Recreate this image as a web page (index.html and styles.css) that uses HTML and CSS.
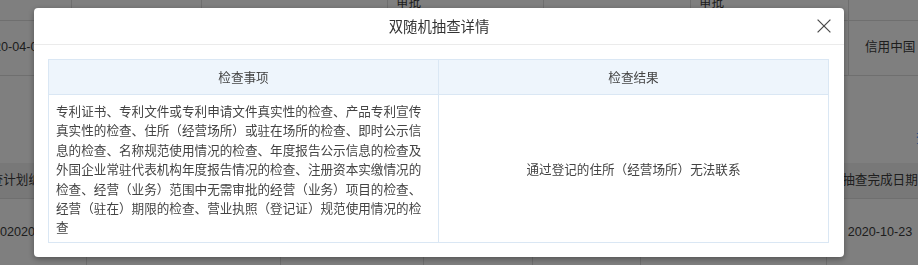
FILE: index.html
```html
<!DOCTYPE html>
<html lang="zh-CN">
<head>
<meta charset="utf-8">
<title>双随机抽查详情</title>
<link rel="stylesheet" href="styles.css">
</head>
<body>
<div class="page">
  <div class="bg-table t1">
    <div class="cell c-top"></div>
    <div class="cell c-top"></div>
    <div class="cell c-top"></div>
    <div class="cell c-top">审批</div>
    <div class="cell c-top"></div>
    <div class="cell c-top">审批</div>
    <div class="cell c-top"></div>

    <div class="cell c-row first">2020-04-09</div>
    <div class="cell c-row"></div>
    <div class="cell c-row"></div>
    <div class="cell c-row"></div>
    <div class="cell c-row"></div>
    <div class="cell c-row"></div>
    <div class="cell c-row last">信用中国（北京）</div>
  </div>

  <div class="mid"><span class="link">查看</span></div>

  <div class="bg-table t2">
    <div class="cell c-head first2">抽查计划编号</div>
    <div class="cell c-head"></div>
    <div class="cell c-head"></div>
    <div class="cell c-head"></div>
    <div class="cell c-head"></div>
    <div class="cell c-head"></div>
    <div class="cell c-head center">抽查完成日期</div>
    <div class="cell c-head"></div>

    <div class="cell c-body first3">2020202010</div>
    <div class="cell c-body"></div>
    <div class="cell c-body"></div>
    <div class="cell c-body"></div>
    <div class="cell c-body"></div>
    <div class="cell c-body"></div>
    <div class="cell c-body center">2020-10-23</div>
    <div class="cell c-body"></div>
  </div>
</div>

<div class="mask"></div>

<div class="modal">
  <div class="modal-header">
    <span></span>
    <h2 class="modal-title">双随机抽查详情</h2>
    <button class="modal-close" aria-label="关闭">
      <svg width="14" height="14" viewBox="0 0 14 14"><path d="M0.6 0.6 L13.4 13.4 M13.4 0.6 L0.6 13.4" stroke="#4a4a4a" stroke-width="1.25" fill="none"/></svg>
    </button>
  </div>
  <div class="modal-body">
    <div class="dtable">
      <div class="dt-head">检查事项</div>
      <div class="dt-head">检查结果</div>
      <div class="dt-cell dt-left">专利证书、专利文件或专利申请文件真实性的检查、产品专利宣传真实性的检查、住所（经营场所）或驻在场所的检查、即时公示信息的检查、名称规范使用情况的检查、年度报告公示信息的检查及外国企业常驻代表机构年度报告情况的检查、注册资本实缴情况的检查、经营（业务）范围中无需审批的经营（业务）项目的检查、经营（驻在）期限的检查、营业执照（登记证）规范使用情况的检查</div>
      <div class="dt-cell dt-right">通过登记的住所（经营场所）无法联系</div>
    </div>
  </div>
</div>
</body>
</html>
```

FILE: styles.css
```css
* { box-sizing: border-box; }

html, body {
  margin: 0;
  padding: 0;
  width: 918px;
  height: 265px;
  overflow: hidden;
  background: #fff;
  font-family: "Liberation Sans", "Noto Sans CJK SC", sans-serif;
  font-size: 12.6px;
  color: #444;
  text-spacing-trim: space-all;
}

.page {
  margin-left: -100px;
  width: 1200px;
}

.bg-table {
  display: grid;
}

.t1 {
  margin-top: -20px;
  grid-template-columns: 172px 130px 186px 156px 147px 158px 251px;
}

.t2 {
  grid-template-columns: 187px 194px 143px 109px 108px 186px 107px 166px;
}

.cell {
  border-right: 1px solid #dfdfdf;
  border-bottom: 1px solid #dfdfdf;
  display: flex;
  align-items: center;
  line-height: 19.4px;
  white-space: nowrap;
  overflow: hidden;
  color: #3c3c3c;
}

.c-top {
  height: 41px;
  align-items: flex-end;
  padding: 0 0 8px 8px;
}

.c-row {
  height: 55px;
}

.first { padding-left: 80px; }
.last { padding-left: 16px; }

.mid {
  height: 87px;
  display: flex;
  align-items: center;
  padding: 38px 0 0 1016px;
}

.link {
  color: #1890ff;
  line-height: 19.4px;
}

.c-head {
  height: 36px;
  background: #f1f1f1;
}

.c-body {
  height: 80px;
  padding-bottom: 12px;
}

.first2 { padding-left: 78px; }
.first3 { padding-left: 93px; }
.center { justify-content: center; }

.mask {
  position: fixed;
  inset: 0;
  background: rgba(0, 0, 0, 0.5);
}

.modal {
  position: fixed;
  top: 8px;
  left: 34px;
  width: 810px;
  height: 249px;
  background: #fff;
  border-radius: 4px;
  box-shadow: 0 2px 6px rgba(0, 0, 0, 0.35);
  font-family: "Noto Sans CJK SC", "Liberation Sans", sans-serif;
}

.modal-header {
  height: 37px;
  border-bottom: 1px solid #ebebeb;
  display: grid;
  grid-template-columns: 1fr auto 1fr;
  align-items: center;
}

.modal-title {
  margin: 0;
  font-size: 14.4px;
  font-weight: normal;
  line-height: 20px;
  color: #333;
}

.modal-close {
  justify-self: end;
  margin-right: 13px;
  width: 14px;
  height: 14px;
  padding: 0;
  border: 0;
  background: none;
  display: flex;
}

.modal-body {
  padding: 14px 15px 0 14px;
}

.dtable {
  display: grid;
  grid-template-columns: 1fr 1fr;
  width: 781px;
  border-top: 1px solid #dae7f4;
  border-left: 1px solid #dae7f4;
}

.dt-head {
  height: 35px;
  background: #eef5fc;
  border-right: 1px solid #dae7f4;
  border-bottom: 1px solid #dae7f4;
  display: flex;
  align-items: center;
  justify-content: center;
  line-height: 19.4px;
  color: #444;
}

.dt-cell {
  height: 148px;
  border-right: 1px solid #dae7f4;
  border-bottom: 1px solid #dae7f4;
  line-height: 19.4px;
  color: #444;
}

.dt-left {
  padding: 6px 8px 5px 7px;
}

.dt-right {
  display: flex;
  align-items: center;
  justify-content: center;
}
```
